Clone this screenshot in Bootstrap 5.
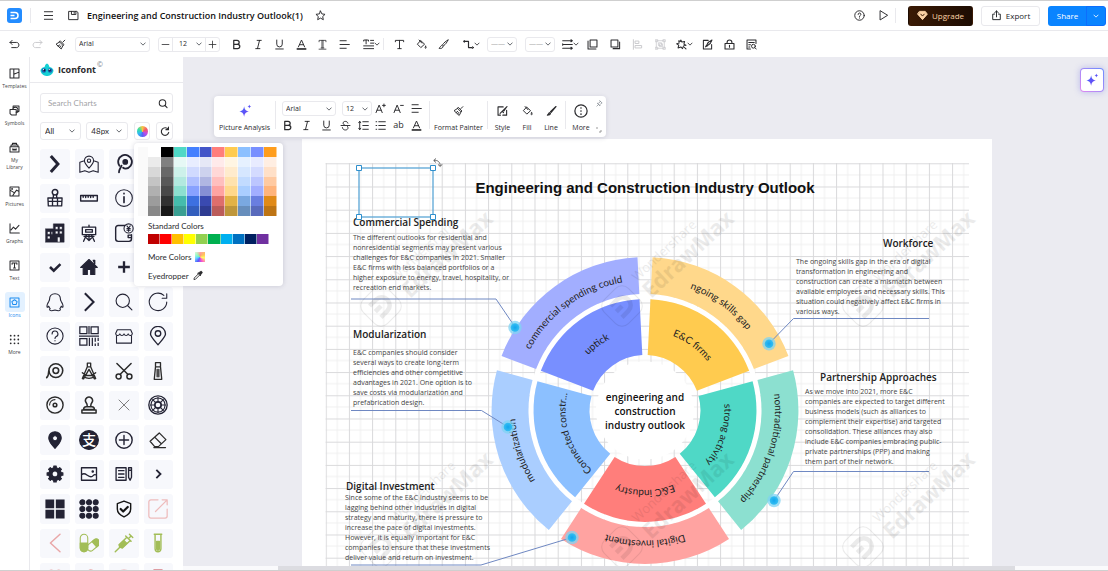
<!DOCTYPE html>
<html lang="en">
<head>
<meta charset="utf-8">
<meta name="viewport" content="width=device-width, initial-scale=1">
<title>Engineering and Construction Industry Outlook(1)</title>
<link href="https://cdn.jsdelivr.net/npm/bootstrap@5.3.0/dist/css/bootstrap.min.css" rel="stylesheet">
<style>
:root{--ink:#2b2b2e;--line:#e9e9ed;--canvas:#ebebf1}
body{font-family:"Open Sans","Noto Sans",sans-serif;font-size:7px;line-height:10px;color:var(--ink)}
.app{border-top:1px solid #cfcfcf;border-bottom:1px solid #cfcfcf;background:#fff}
button{font:inherit;color:inherit}
.ic{width:11px;height:11px;fill:none;stroke:currentColor;stroke-width:1.4;stroke-linejoin:round;stroke-linecap:round;flex:none;display:block}
.ic-sm{width:6px;height:6px}
.ic-lg{width:14px;height:14px}
.tool{border:0;background:none;padding:0;display:flex;align-items:center;justify-content:center}
.tool:disabled{color:#c9c9cc}
.w24{width:24px}
.w22{width:22px}
.topbar{height:30px;border-bottom:1px solid var(--line);padding:0 2px 0 7px}
.rule{width:1px;background:var(--line);flex:none}
.doc-title{font-size:9px;font-weight:600;line-height:14px;margin:0;color:#111}
.lead-tools{gap:14px}
.pill{height:20px;font-size:8px;line-height:10px;border-radius:3px;padding:0}
.pill-up{width:65px;background:linear-gradient(90deg,#3a1a04,#1d0c02);color:#fcd3a5}
.pill-ex{width:59px;border:1px solid var(--line);background:#fff}
.pill-sh{background:#0a84ff;color:#fff}
.toolbar{height:26px;padding-left:3px}
.form-select.mini{font:inherit;min-height:0;height:15px;padding:0 10px 0 3px;border:1px solid var(--line);border-radius:3px;background-color:#fff;background-size:6px 6px;background-position:right 3px center;color:var(--ink)}
.form-select.bare{border:0;border-left:1px solid var(--line);border-right:1px solid var(--line);border-radius:0;height:13px;padding-left:6px}
.form-select.pale{color:#aaa;width:30px;padding-right:8px}
.sizer{width:62px;height:15px;border:1px solid var(--line);border-radius:3px}
.set6{width:129px;margin-left:6px}.set3{width:67px}.set4{width:91px}
.rail{width:30px;border-right:1px solid var(--line);padding-top:6px;gap:10px}
.rail a{font-size:5px;line-height:7px;color:#444;text-decoration:none;text-align:center;display:block}
.rail .pad{width:20px;height:20px;border-radius:3px;margin:0 auto;display:flex;align-items:center;justify-content:center;color:var(--ink)}
.rail a.active,.rail a.active .pad{color:#1a8bf0}
.rail a.active .pad{background:#e3f1ff}
.panel{width:153px;background:#fff}
.panel-head{height:26px;padding-left:10px;border-bottom:1px solid var(--line)}
.brand{font-size:9px;font-weight:700;line-height:12px;margin:0}
.panel-body{padding:10px 10px 0}
.searchbox{height:20px;border:1px solid var(--line);border-radius:3px}
.searchbox input{font:8px/12px Lato,sans-serif;padding:1px 0 1px 7px;border:0;min-height:0;height:auto;background:none}
.searchbox input::placeholder{color:#a2a2a6}
.filters{gap:5px;margin:9px 0 9px;font:8px/10px Lato,sans-serif}
.filters .mini{height:18px;padding-left:4px;width:42px;background-position:right 5px center}
.sq{width:17px;height:18px;border:1px solid var(--line);border-radius:3px;margin-left:1px}
.tiles{display:grid;grid-template-columns:repeat(4,1fr);gap:5px}
.tile{border:0;padding:0;aspect-ratio:1;background:#f7f8fc;border-radius:3px;display:flex;align-items:center;justify-content:center;color:#232334}
.tile svg{width:20px;height:20px;fill:none;stroke:currentColor;stroke-width:1.3;stroke-linecap:round;stroke-linejoin:round}
.tile .f{fill:currentColor}
.wheel-dot{width:11px;height:11px;border-radius:50%;background:conic-gradient(#f6c544,#f4566a,#c04be8,#5a62f5,#2fb8f2,#37e0a0,#f6c544)}
.popover-colors{left:134px;top:86px;width:149px;height:143px;background:#fff;border-radius:4px;box-shadow:0 0 5px rgba(40,40,80,.18);padding:4px 6px 0 14px;z-index:5;font:8px/10px Lato,sans-serif}
.swatches{display:grid;grid-template-columns:repeat(10,1fr);grid-template-rows:repeat(7,1fr);width:129px;height:69px;box-shadow:-10px 0 #fafafa;margin-bottom:5px}
.swatches button,.std button{border:0;padding:0;border-right:1px solid rgba(255,255,255,.5)}
.std{width:121px;height:10px;margin:3px 0 8px}
.std button{flex:1}
.spectrum{width:10px;height:10px;background:linear-gradient(135deg,#fffb,#fff0 60%),conic-gradient(#f66,#fb5,#ff6,#f5c,#55f,#3cf,#5f8,#f66)}
.canvas{background:var(--canvas);padding-left:3px}
.floatbar{left:31px;top:39px;width:392px;height:41px;background:#fff;border-radius:4px;box-shadow:0 1px 5px rgba(40,40,80,.14);z-index:3;font-size:7px}
.floatbar .stack{height:41px;display:flex;flex-direction:column;align-items:center;border:0;background:none;padding:7px 0 0;gap:4px;white-space:nowrap;line-height:10px}
.floatbar .rule{height:28px;margin-top:5px}
.minigrid{display:grid;grid-template-columns:repeat(8,1fr);width:147px;margin:5px 4px 0 2px;grid-template-rows:15px 18px;align-items:center}
.ai{right:4px;top:11px;width:24px;height:24px;border-radius:4px;border:1px solid transparent;background:linear-gradient(#fff,#fff) padding-box,linear-gradient(45deg,#e08af0,#6a8cff) border-box;box-shadow:0 0 6px rgba(90,90,220,.35)}
.sheet{width:690px;margin-top:82px;height:520px;background:#fff;flex:none}
.sheet>svg{display:block}
.note{white-space:nowrap;margin:0;font-size:7px;line-height:10px;color:#444}
.note-h{white-space:nowrap;margin:0;font-size:10px;font-weight:600;line-height:14px;color:#222}
.sheet-title{font:bold 15px/20px "Liberation Sans",Arial,sans-serif;color:#111;margin:0;top:39px;padding-right:4px}
.hub{font:600 10px/14px "Open Sans",sans-serif;color:#111;left:293px;top:251px;width:100px}
.arc text{font:10px Lato,"Open Sans",sans-serif;fill:#222;text-anchor:middle}
.wm{opacity:.075}
.hscroll{height:4px;left:0;right:0;bottom:0;background:#fafafc;z-index:2}
.hscroll div{margin-left:95px;margin-right:93px;height:4px;background:#dcdce1}
</style>
</head>
<body>
<svg class="position-absolute" width="0" height="0" aria-hidden="true">
<symbol id="menu" viewBox="0 0 16 16"><path d="M2 2.500h12M2 8h12M2 13.500h12"/></symbol>
<symbol id="save" viewBox="0 0 16 16"><path d="M1.500 2h11l2 1.500V14h-13zM5 2v4.500h6.500V2M9 3.500v1.500"/></symbol>
<symbol id="star" viewBox="0 0 16 16"><path d="M8 1.500l2 4.200 4.600.6-3.400 3.200.9 4.600L8 11.800l-4.100 2.300.9-4.600L1.400 6.300l4.600-.6z"/></symbol>
<symbol id="help" viewBox="0 0 16 16"><circle cx="8" cy="8" r="6.900"/><path d="M6 6.500a2 2 0 1 1 3 1.600c-.7.4-1 .7-1 1.400M8 11.500v.3"/></symbol>
<symbol id="play" viewBox="0 0 16 16"><path d="M3 1.500v13L13.500 8z"/></symbol>
<symbol id="gem" viewBox="0 0 16 16"><path fill="currentColor" d="M4 2h8l3 4-7 8-7-8z"/><path stroke="#3a1a04" d="M5.500 6L8 8.800 10.500 6"/></symbol>
<symbol id="export" viewBox="0 0 16 16"><path d="M5 6H2.500v8h11V6H11M8 10V1.500M5.200 4L8 1.500 10.800 4"/></symbol>
<symbol id="chev" viewBox="0 0 16 16"><path stroke-width="2.200" d="M2.500 5.500L8 11l5.500-5.500"/></symbol>
<symbol id="undo" viewBox="0 0 16 16"><path d="M4.500 2L1.500 5l3 3M1.500 5H11c4.500 0 4.500 7.500 0 7.500H4"/></symbol>
<symbol id="redo" viewBox="0 0 16 16"><path d="M11.500 2l3 3-3 3M14.500 5H5C.500 5 .500 12.500 5 12.500h7"/></symbol>
<symbol id="painter" viewBox="0 0 16 16"><path d="M14.300 1.700L11.500 4.500M8 3l5 5-1.300 1.300-5-5zM6.700 4.300L1.500 7.500l7.500 7 2.700-5.200M4.500 10.300l2.500-1.800M6.800 12.300L8.500 10"/></symbol>
<symbol id="minus" viewBox="0 0 16 16"><path d="M2 8h12"/></symbol>
<symbol id="plus" viewBox="0 0 16 16"><path d="M2 8h12M8 2v12"/></symbol>
<symbol id="bold" viewBox="0 0 16 16"><path stroke-width="1.800" d="M4 2h5a2.900 2.900 0 0 1 0 5.800H4zM4 7.800h5.700a3.100 3.100 0 0 1 0 6.200H4z"/></symbol>
<symbol id="ital" viewBox="0 0 16 16"><path d="M6 2h6M4 14h6M9.500 2l-3 12"/></symbol>
<symbol id="under" viewBox="0 0 16 16"><path d="M4 1.500v6a4 4 0 0 0 8 0v-6M2.500 14.500h11"/></symbol>
<symbol id="color" viewBox="0 0 16 16"><path d="M3.500 11.500L8 1.500l4.500 10M5 8.300h6"/><path stroke-width="2.400" stroke-linecap="butt" d="M1 14.500h14"/></symbol>
<symbol id="tdown" viewBox="0 0 16 16"><path d="M3 4V2h10v2M7.200 2v11M8.800 2v11M6 13h4M3 14.800h10" stroke-width="1.100"/></symbol>
<symbol id="align" viewBox="0 0 16 16"><path d="M1.500 2.500h9M1.500 8h13.500M1.500 13.500h9"/></symbol>
<symbol id="talign" viewBox="0 0 16 16"><path d="M1 3V1.500h7V3M4.500 1.500V7M11 2h4.500M11 6h4.500M1 10h14.500M1 14h14.500"/></symbol>
<symbol id="tee" viewBox="0 0 16 16"><path d="M2 4V2h12v2M8 2v12M5.500 14h5"/></symbol>
<symbol id="bucket" viewBox="0 0 16 16"><path d="M6.500 2.500L2 7.500l5 5 5.500-5-5.500-5M4.500 1.500l4 4.500M14 10.500c1 1.500 1 3 0 3s-1-1.500 0-3z"/></symbol>
<symbol id="brush" viewBox="0 0 16 16"><path d="M14.500 1.500c-3 1.500-6 4-8 7l1.500 1.500c3-2.300 5.500-5.500 6.500-8.500zM6 9c-2 0-2 2.500-4.500 4.500C4 14.500 7.500 13.500 7.500 10.500"/></symbol>
<symbol id="conn" viewBox="0 0 16 16"><path stroke-width="1.700" d="M2 3.500h6v9h5"/><circle cx="2" cy="3.500" r="1.200"/><circle cx="14" cy="12.500" r="1.200"/></symbol>
<symbol id="weights" viewBox="0 0 16 16"><path d="M1 2.500h12M1 8h14M1 13.500h12M13 1l2 1.500L13 4M1 7v2M13 12l2 1.500-2 1.500" stroke-width="1.500"/></symbol>
<symbol id="front" viewBox="0 0 16 16"><path d="M4.500 1.500h10v10h-10zM1.500 3v11.500H13" stroke-width="1.500"/></symbol>
<symbol id="back" viewBox="0 0 16 16"><path d="M1.500 1.500h10v10h-10zM14 4.500V14H4.500" stroke-width="1.500"/></symbol>
<symbol id="lalign" viewBox="0 0 16 16"><path d="M2 1v14M5 3h5v3.500H5zM5 9.500h9V13H5z"/></symbol>
<symbol id="group" viewBox="0 0 16 16"><path d="M2.500 2.500h11v11h-11zM1 1h3v3H1zM12 1h3v3h-3zM1 12h3v3H1zM12 12h3v3h-3zM5.500 5.500h4v4h-4zM7 7h4v4H7z" stroke-width="1.100"/></symbol>
<symbol id="magic" viewBox="0 0 16 16"><path stroke-width="1.500" d="M7 1.500l1.500 3 4-1-1 4 3 1.500-3.500 1L9.500 14 7 11.500 3 13l1-4L1 7l3.500-1L4 2.500l2.500 1zM12 12l2.500 2.500"/></symbol>
<symbol id="edit" viewBox="0 0 16 16"><path stroke-width="1.500" d="M9 2H2v12.500h12V8M14.500 1.500C11 3 8 6 7 8.500L8 9.500C11 8 13.500 5 14.500 1.500zM6.500 9L5 11.500 8 10"/></symbol>
<symbol id="lock" viewBox="0 0 16 16"><path stroke-width="1.600" d="M1.500 6.500h13v8h-13zM4.500 6.500V5a3.500 3.500 0 0 1 7 0v1.500M8 9v3"/></symbol>
<symbol id="find" viewBox="0 0 16 16"><path stroke-width="1.500" d="M14.500 6.500v-5h-13v13h5M4 5h8M4 8.500h2.500M4 11.500h1.500"/><circle cx="10.800" cy="10.500" r="2.800"/><path d="M13 12.700l2 2"/></symbol>
<symbol id="templates" viewBox="0 0 16 16"><path stroke-width="1.500" d="M1.500 1.500h13v13h-13zM7 1.500v13M7 9l7.500-3"/></symbol>
<symbol id="symbols" viewBox="0 0 16 16"><path stroke-width="1.500" d="M6 4V1.500h8.500V9L12 10.500M1.500 6.500h9v8h-7l-2-2z"/><path stroke-width="1.500" d="M5.500 6.500a3.800 3.800 0 1 1 5 4"/></symbol>
<symbol id="library" viewBox="0 0 16 16"><path stroke-width="1.500" d="M1.500 7h13v7.500h-13zM3 7V4.500h10V7M5 4.500V2h6v2.500M5.500 10.500h5M5.500 10v1.500h5V10"/></symbol>
<symbol id="pictures" viewBox="0 0 16 16"><path stroke-width="1.500" d="M1.500 1.500h13v13h-13zM1.500 6l6.500 4 3-4 3.500 2M5 14.500l3-4.500"/><path d="M4.500 3.500v1.500M3.800 4.300h1.500"/></symbol>
<symbol id="graphs" viewBox="0 0 16 16"><path stroke-width="1.500" d="M1.500 1v13.500h13.500M3 10l3.500-4 3 3 5-5.500"/></symbol>
<symbol id="textbox" viewBox="0 0 16 16"><path stroke-width="1.500" d="M1.500 1.500h13v13h-13zM4.500 6V4.500h7V6M8 4.500v7M6.500 11.500h3"/></symbol>
<symbol id="icons" viewBox="0 0 16 16"><path stroke-width="1.500" d="M1.500 1.500h13v13h-13zM8 4l3.800 2.700-1.500 4.300H5.700L4.200 6.700z"/></symbol>
<symbol id="apps" viewBox="0 0 16 16"><g fill="currentColor" stroke="none"><circle cx="2.500" cy="2.500" r="1.300"/><circle cx="8" cy="2.500" r="1.300"/><circle cx="13.500" cy="2.500" r="1.300"/><circle cx="2.500" cy="8" r="1.300"/><circle cx="8" cy="8" r="1.300"/><circle cx="13.500" cy="8" r="1.300"/><circle cx="2.500" cy="13.500" r="1.300"/><circle cx="8" cy="13.500" r="1.300"/><circle cx="13.500" cy="13.500" r="1.300"/></g></symbol>
<symbol id="search" viewBox="0 0 16 16"><circle cx="7.200" cy="7.200" r="5.200" stroke-width="1.700"/><path stroke-width="1.700" d="M11.200 11.200l3.300 3.300"/></symbol>
<symbol id="reload" viewBox="0 0 16 16"><path stroke-width="1.800" d="M13 4.500A6 6 0 1 0 14 9.500M13.500 1v4H9.500"/></symbol>
<symbol id="strike" viewBox="0 0 16 16"><path d="M11.500 4.500C11 1 4.500 1.200 4.500 4.500c0 1.500 1 2.500 2.500 3M11 9.500c2 3-.500 5-3 5-2.500 0-4-1-4.500-3.500M1.500 8h13"/></symbol>
<symbol id="spacing" viewBox="0 0 16 16"><path d="M2.500 2v12M1 4l1.500-2L4 4M1 12l1.500 2L4 12M7 2.500h8M7 8h8M7 13.500h8"/></symbol>
<symbol id="bullets" viewBox="0 0 16 16"><path d="M1.500 2.500h1M5.500 2.500H15M1.500 8h1M5.500 8H15M1.500 13.500h1M5.500 13.500H15"/></symbol>
<symbol id="bigger" viewBox="0 0 16 16"><path d="M1.500 14L6 3l4.500 11M3 10.500h6M13 1.500v4M11 3.500h4"/></symbol>
<symbol id="smaller" viewBox="0 0 16 16"><path d="M1.500 14L6 3l4.500 11M3 10.500h6M11 3.500h4"/></symbol>
<symbol id="style" viewBox="0 0 16 16"><path stroke-width="1.600" d="M9 2H1.500v12M1.500 14H5M14 7v7H8.500M14.500 1.500L4.500 11.500M8 9l1.500 1.500M14.500 1.500L10 8"/></symbol>
<symbol id="pen" viewBox="0 0 16 16"><path stroke-width="1.700" d="M14.500 1.500L6.500 9l1 1zM5 10.500c-1 .5-1 2-3 3.500 2.500 0 4-.5 4.500-2z"/></symbol>
<symbol id="more" viewBox="0 0 16 16"><circle cx="8" cy="8" r="7"/><path stroke-width="1.800" d="M8 4.500v.1M8 8v.1M8 11.500v.1"/></symbol>
<symbol id="pin" viewBox="0 0 16 16"><path d="M9 2l5 5-2 .5-3 3v3L3 7.500h3l3-3zM5.500 10.500L2 14"/></symbol>
<linearGradient id="sg" x1="0" y1="0" x2="1" y2="1"><stop offset="0" stop-color="#3b6bff"/><stop offset="1" stop-color="#7a3cf0"/></linearGradient>
<symbol id="spark" viewBox="0 0 16 16"><path fill="url(#sg)" stroke="none" d="M7 2.500c.8 4 1.500 5 5.500 6-4 1-4.700 2-5.500 6-.8-4-1.500-5-5.500-6 4-1 4.700-2 5.500-6zM13 .500c.3 1.500.6 1.900 2.200 2.300-1.600.4-1.900.8-2.200 2.300-.3-1.500-.6-1.900-2.200-2.300 1.600-.4 1.900-.8 2.200-2.300z"/></symbol>
<symbol id="dropper" viewBox="0 0 16 16"><path d="M9 5l-7 7-.5 2.500L4 14l7-7"/><path fill="currentColor" d="M8 4l1.500-.5 2.500-2c1.500-1 3.500 1 2.500 2.500L12.500 6.500 12 8z"/></symbol>
</svg>

<div class="app d-flex flex-column vh-100 overflow-hidden">
<header class="topbar d-flex align-items-center flex-shrink-0">
  <svg width="15" height="15" viewBox="0 0 15 15" role="img" aria-label="EdrawMax"><rect width="15" height="15" rx="3" fill="#238cff"/><path d="M3.500 4.500H8a3 3 0 0 1 0 6H3.500M3.500 7.500h4" fill="none" stroke="#fff" stroke-width="1.500"/></svg>
  <span class="rule ms-2 me-2" style="height:15px"></span>
  <div class="lead-tools d-flex ms-1">
    <button class="tool" aria-label="Menu"><svg class="ic"><use href="#menu"/></svg></button>
    <button class="tool" aria-label="Save"><svg class="ic"><use href="#save"/></svg></button>
  </div>
  <h1 class="doc-title ms-2">Engineering and Construction Industry Outlook(1)</h1>
  <button class="tool ms-2 ps-1" aria-label="Favourite"><svg class="ic"><use href="#star"/></svg></button>
  <div class="ms-auto d-flex align-items-center">
    <button class="tool w24" aria-label="Help"><svg class="ic"><use href="#help"/></svg></button>
    <button class="tool w24" aria-label="Present"><svg class="ic"><use href="#play"/></svg></button>
    <span class="rule me-2" style="height:15px"></span>
    <button class="btn pill pill-up d-flex align-items-center justify-content-center gap-1 ms-1"><svg class="ic"><use href="#gem"/></svg>Upgrade</button>
    <button class="btn pill pill-ex d-flex align-items-center justify-content-center gap-1 ms-2"><svg class="ic"><use href="#export"/></svg>Export</button>
    <div class="btn-group ms-2">
      <button class="btn pill pill-sh" style="width:39px">Share</button>
      <button class="btn pill pill-sh border-start border-primary d-flex align-items-center justify-content-center" style="width:20px" aria-label="Share options"><svg class="ic ic-sm"><use href="#chev"/></svg></button>
    </div>
  </div>
</header>

<div class="toolbar d-flex align-items-center flex-shrink-0" role="toolbar" aria-label="Formatting">
  <button class="tool w22" aria-label="Undo"><svg class="ic"><use href="#undo"/></svg></button>
  <button class="tool w24" disabled aria-label="Redo"><svg class="ic"><use href="#redo"/></svg></button>
  <button class="tool w22" aria-label="Format painter"><svg class="ic"><use href="#painter"/></svg></button>
  <select class="form-select mini ms-1" style="width:75px" aria-label="Font"><option>Arial</option></select>
  <div class="sizer d-flex align-items-center ms-2">
    <button class="tool" style="width:13px" aria-label="Decrease"><svg class="ic" style="width:9px"><use href="#minus"/></svg></button>
    <select class="form-select mini bare flex-fill w-auto" aria-label="Font size"><option>12</option></select>
    <button class="tool" style="width:13px" aria-label="Increase"><svg class="ic" style="width:9px"><use href="#plus"/></svg></button>
  </div>
  <div class="set6 d-flex">
    <button class="tool flex-fill" aria-label="Bold"><svg class="ic"><use href="#bold"/></svg></button>
    <button class="tool flex-fill" aria-label="Italic"><svg class="ic"><use href="#ital"/></svg></button>
    <button class="tool flex-fill" aria-label="Underline"><svg class="ic"><use href="#under"/></svg></button>
    <button class="tool flex-fill" aria-label="Font colour"><svg class="ic"><use href="#color"/></svg></button>
    <button class="tool flex-fill" aria-label="Text direction"><svg class="ic"><use href="#tdown"/></svg></button>
    <button class="tool flex-fill" aria-label="Align"><svg class="ic"><use href="#align"/></svg></button>
  </div>
  <button class="tool w24 ms-1" aria-label="Line spacing"><svg class="ic"><use href="#talign"/></svg><svg class="ic ic-sm"><use href="#chev"/></svg></button>
  <span class="rule" style="height:12px"></span>
  <div class="set3 d-flex ms-1">
    <button class="tool flex-fill" aria-label="Text"><svg class="ic"><use href="#tee"/></svg></button>
    <button class="tool flex-fill" aria-label="Fill"><svg class="ic"><use href="#bucket"/></svg></button>
    <button class="tool flex-fill" aria-label="Line"><svg class="ic"><use href="#brush"/></svg></button>
  </div>
  <button class="tool w24 ms-1" aria-label="Connector"><svg class="ic"><use href="#conn"/></svg><svg class="ic ic-sm"><use href="#chev"/></svg></button>
  <select class="form-select mini pale ms-1" aria-label="Line weight"><option>——</option></select>
  <select class="form-select mini pale ms-2" aria-label="Line dash"><option>——</option></select>
  <button class="tool w22 ms-1" aria-label="Arrows"><svg class="ic"><use href="#weights"/></svg><svg class="ic ic-sm"><use href="#chev"/></svg></button>
  <div class="set4 d-flex">
    <button class="tool flex-fill" aria-label="Bring to front"><svg class="ic"><use href="#front"/></svg></button>
    <button class="tool flex-fill" aria-label="Send to back"><svg class="ic"><use href="#back"/></svg></button>
    <button class="tool flex-fill" disabled aria-label="Align shapes"><svg class="ic"><use href="#lalign"/></svg></button>
    <button class="tool flex-fill" disabled aria-label="Group"><svg class="ic"><use href="#group"/></svg></button>
  </div>
  <button class="tool w24" aria-label="Effects"><svg class="ic"><use href="#magic"/></svg><svg class="ic ic-sm"><use href="#chev"/></svg></button>
  <div class="set3 d-flex">
    <button class="tool flex-fill" aria-label="Edit"><svg class="ic"><use href="#edit"/></svg></button>
    <button class="tool flex-fill" aria-label="Lock"><svg class="ic"><use href="#lock"/></svg></button>
    <button class="tool flex-fill" aria-label="Find"><svg class="ic"><use href="#find"/></svg></button>
  </div>
</div>

<div class="d-flex flex-fill position-relative" style="min-height:0">
  <nav class="rail d-flex flex-column flex-shrink-0" aria-label="Libraries">
    <a href="#"><span class="pad"><svg class="ic"><use href="#templates"/></svg></span>Templates</a>
    <a href="#"><span class="pad"><svg class="ic"><use href="#symbols"/></svg></span>Symbols</a>
    <a href="#"><span class="pad"><svg class="ic"><use href="#library"/></svg></span>My<br>Library</a>
    <a href="#"><span class="pad"><svg class="ic"><use href="#pictures"/></svg></span>Pictures</a>
    <a href="#"><span class="pad"><svg class="ic"><use href="#graphs"/></svg></span>Graphs</a>
    <a href="#"><span class="pad"><svg class="ic"><use href="#textbox"/></svg></span>Text</a>
    <a href="#" class="active"><span class="pad"><svg class="ic"><use href="#icons"/></svg></span>Icons</a>
    <a href="#"><span class="pad"><svg class="ic"><use href="#apps"/></svg></span>More</a>
  </nav>

  <aside class="panel flex-shrink-0 overflow-hidden">
    <div class="panel-head d-flex align-items-center">
      <svg width="14" height="14" viewBox="0 0 14 14" class="me-1" aria-hidden="true"><path d="M7 .5C9 1.500 9 3 9.500 4 12 4.500 13.500 6 13.500 8 12.500 12 9 13 7 13S1.500 12 .500 8C.500 6 2 4.500 4.500 4 5 3 5 1.500 7 .500z" fill="#14cfd3"/><circle cx="3.900" cy="7.500" r="2.300" fill="#1b66b8"/><circle cx="10.100" cy="7.500" r="2.300" fill="#1b66b8"/><circle cx="4.300" cy="7.300" r="1.100" fill="#0b1a30"/><circle cx="9.700" cy="7.300" r="1.100" fill="#0b1a30"/><circle cx="3.500" cy="6.600" r=".6" fill="#fff"/><circle cx="9.300" cy="6.600" r=".6" fill="#fff"/></svg>
      <h2 class="brand">Iconfont</h2><span class="align-self-start text-secondary" style="padding:3px 1px">©</span>
    </div>
    <div class="panel-body">
      <div class="searchbox d-flex align-items-center">
        <label class="visually-hidden" for="q">Search Charts</label>
        <input id="q" class="form-control shadow-none" placeholder="Search Charts">
        <svg class="ic me-1" style="width:10px"><use href="#search"/></svg>
      </div>
      <div class="filters d-flex">
        <select class="form-select mini" aria-label="Category"><option>All</option></select>
        <select class="form-select mini" aria-label="Size"><option>48px</option></select>
        <button class="tool sq" aria-label="Colour"><span class="wheel-dot"></span></button>
        <button class="tool sq" aria-label="Refresh"><svg class="ic" style="width:10px"><use href="#reload"/></svg></button>
      </div>
      <div class="tiles" id="tiles"></div>
    </div>
  </aside>

  <div class="popover-colors position-absolute" role="dialog" aria-label="Colours">
    <div class="swatches" id="theme"></div>
    <div>Standard Colors</div>
    <div class="std d-flex" id="std"></div>
    <button class="tool gap-1 mb-2">More Colors <span class="spectrum"></span></button>
    <button class="tool gap-1">Eyedropper <svg class="ic" style="width:10px"><use href="#dropper"/></svg></button>
  </div>

  <main class="canvas flex-fill position-relative overflow-hidden d-flex justify-content-center align-items-start">
    <div class="floatbar position-absolute d-flex">
      <button class="stack" style="width:61px"><svg class="ic ic-lg" style="height:16px"><use href="#spark"/></svg>Picture Analysis</button>
      <span class="rule"></span>
      <div class="minigrid">
        <select class="form-select mini" style="grid-column:span 3;width:54px;margin-left:4px" aria-label="Font"><option>Arial</option></select>
        <select class="form-select mini" style="grid-column:span 2;width:30px;margin-left:6px" aria-label="Font size"><option>12</option></select>
        <button class="tool" aria-label="Bigger"><svg class="ic"><use href="#bigger"/></svg></button>
        <button class="tool" aria-label="Smaller"><svg class="ic"><use href="#smaller"/></svg></button>
        <button class="tool" aria-label="Align"><svg class="ic"><use href="#align"/></svg></button>
        <button class="tool" aria-label="Bold"><svg class="ic"><use href="#bold"/></svg></button>
        <button class="tool" aria-label="Italic"><svg class="ic"><use href="#ital"/></svg></button>
        <button class="tool" aria-label="Underline"><svg class="ic"><use href="#under"/></svg></button>
        <button class="tool" aria-label="Strike"><svg class="ic"><use href="#strike"/></svg></button>
        <button class="tool" aria-label="Line spacing"><svg class="ic"><use href="#spacing"/></svg></button>
        <button class="tool" aria-label="Bullets"><svg class="ic"><use href="#bullets"/></svg></button>
        <button class="tool" style="font-size:9px">ab</button>
        <button class="tool" aria-label="Font colour"><svg class="ic"><use href="#color"/></svg></button>
      </div>
      <span class="rule"></span>
      <button class="stack" style="width:57px"><svg class="ic" style="height:16px"><use href="#painter"/></svg>Format Painter</button>
      <span class="rule"></span>
      <button class="stack" style="width:29px"><svg class="ic" style="height:16px"><use href="#style"/></svg>Style</button>
      <button class="stack" style="width:20px"><svg class="ic" style="height:16px"><use href="#bucket"/></svg>Fill</button>
      <button class="stack" style="width:28px"><svg class="ic" style="height:16px"><use href="#pen"/></svg>Line</button>
      <span class="rule"></span>
      <button class="stack" style="width:30px"><svg class="ic ic-lg" style="height:16px"><use href="#more"/></svg>More</button>
      <div class="d-flex flex-column justify-content-between py-1 text-secondary"><svg class="ic" style="width:7px;height:7px"><use href="#pin"/></svg><svg width="6" height="6" viewBox="0 0 6 6" fill="none" stroke="#999"><path d="M0 1h2M5 3v2H3"/></svg></div>
    </div>
    <button class="ai tool position-absolute" aria-label="AI assistant"><svg class="ic ic-lg"><use href="#spark"/></svg></button>

    <article class="sheet position-relative">
      <svg width="690" height="520" viewBox="302 139 690 520" aria-hidden="true">
        <defs>
          <pattern id="grid" x="325.700" y="163.300" width="23.200" height="23.200" patternUnits="userSpaceOnUse"><path d="M11.600 0v23.200M0 11.600h23.200" stroke="#f0f0f0" fill="none"/><path d="M0 0v23.200M0 0h23.200" stroke="#d9d9db" stroke-width="2" fill="none"/></pattern>
          <path id="outer" d="M-84-128.400A153.500 153.500 0 0 1 84-128.400L63.800-97.500A116.500 116.500 0 0 0-63.800-97.500z"/>
          <path id="inner" d="M-61-93.300A111.500 111.500 0 0 1 61-93.300L30.400-46.400A55.500 55.500 0 0 0-30.400-46.400z"/>
          <path id="arcO" d="M-130 0A130 130 0 0 1 130 0"/>
          <path id="arcI" d="M-79.500 0A79.500 79.500 0 0 1 79.500 0"/>
          <radialGradient id="dotg"><stop offset="0" stop-color="#12a5ee"/><stop offset="1" stop-color="#35bff2"/></radialGradient>
          <g id="dot"><circle r="6.700" fill="#7fd3f3" opacity=".75"/><circle r="4.300" fill="url(#dotg)"/></g>
          <g id="mark" class="wm"><g transform="rotate(-45)"><rect x="-17" y="-17" width="34" height="34" rx="9" fill="none" stroke="#000"/></g><path transform="rotate(-45)" d="M-8-8H1A8 8 0 0 1 1 8H-8M-8 0H0" fill="none" stroke="#000" stroke-width="4.500"/><text transform="translate(15 -24) rotate(-43)" font-family="Open Sans" font-size="13">Wondershare</text><text transform="translate(29 -7) rotate(-43)" font-family="Open Sans" font-weight="700" font-size="22">EdrawMax</text></g>
        </defs>
        <rect x="325.500" y="163" width="643.500" height="480" fill="url(#grid)"/>
        <g class="arc" transform="translate(645 410.500)">
          <circle r="49" fill="#fff"/><circle r="114" fill="none" stroke="#fff" stroke-width="5"/>
          <g transform="rotate(36)"><use href="#outer" fill="#ffd88b"/><use href="#inner" fill="#ffcb4f"/><text><textPath href="#arcO" startOffset="50%">ngoing skills gap</textPath></text><text><textPath href="#arcI" startOffset="50%">E&amp;C firms</textPath></text></g>
          <g transform="rotate(108)"><use href="#outer" fill="#8ce0d0"/><use href="#inner" fill="#4fd8c6"/><text><textPath href="#arcO" startOffset="50%">nontraditional partnership</textPath></text><text><textPath href="#arcI" startOffset="50%">strong activity</textPath></text></g>
          <g transform="rotate(180)"><use href="#outer" fill="#ffa3a1"/><use href="#inner" fill="#ff7e7b"/><text><textPath href="#arcO" startOffset="50%">Digital investment</textPath></text><text><textPath href="#arcI" startOffset="50%">E&amp;C industry</textPath></text></g>
          <g transform="rotate(252)"><use href="#outer" fill="#aaceff"/><use href="#inner" fill="#8cc0ff"/><text><textPath href="#arcO" startOffset="50%">modularization</textPath></text><text><textPath href="#arcI" startOffset="50%">Connected constr...</textPath></text></g>
          <g transform="rotate(324)"><use href="#outer" fill="#a2aeff"/><use href="#inner" fill="#788fff"/><text><textPath href="#arcO" startOffset="50%">commercial spending could</textPath></text><text><textPath href="#arcI" startOffset="50%">uptick</textPath></text></g>
        </g>
        <g fill="none" stroke="#6f88c2"><path d="M351 299h145l19 28M351 410.500h130.500L508 427M351 565h130l91-27.500M929 318.500H793.500L769 343.700M929 471.500H793.500L774 500.500"/></g>
        <use href="#dot" x="515" y="327.500"/><use href="#dot" x="508" y="427"/><use href="#dot" x="572" y="537.500"/><use href="#dot" x="769" y="343.700"/><use href="#dot" x="774" y="500.500"/>
        <use href="#mark" x="381" y="306"/><use href="#mark" x="622" y="306"/><use href="#mark" x="863" y="306"/><use href="#mark" x="381" y="547"/><use href="#mark" x="622" y="547"/><use href="#mark" x="863" y="547"/>
      </svg>
      <h2 class="sheet-title position-absolute start-0 end-0 text-center">Engineering and Construction Industry Outlook</h2>
      <p class="hub position-absolute text-center m-0">engineering and<br>construction<br>industry outlook</p>
      <h3 class="note-h position-absolute" style="left:51px;top:76px">Commercial Spending</h3>
      <p class="note position-absolute" style="left:51px;top:94px">The different outlooks for residential and<br>nonresidential segments may present various<br>challenges for E&amp;C companies in 2021. Smaller<br>E&amp;C firms with less balanced portfolios or a<br>higher exposure to energy, travel, hospitality, or<br>recreation end markets.</p>
      <h3 class="note-h position-absolute" style="left:51px;top:188px">Modularization</h3>
      <p class="note position-absolute" style="left:51px;top:209px">E&amp;C companies should consider<br>several ways to create long-term<br>efficiencies and other competitive<br>advantages in 2021. One option is to<br>save costs via modularization and<br>prefabrication design.</p>
      <h3 class="note-h position-absolute" style="left:44px;top:340px">Digital Investment</h3>
      <p class="note position-absolute" style="left:43px;top:354px">Since some of the E&amp;C industry seems to be<br>lagging behind other industries in digital<br>strategy and maturity, there is pressure to<br>increase the pace of digital investments.<br>However, it is equally important for E&amp;C<br>companies to ensure that these investments<br>deliver value and return on investment.</p>
      <h3 class="note-h position-absolute" style="left:581px;top:97px">Workforce</h3>
      <p class="note position-absolute" style="left:494px;top:118px">The ongoing skills gap in the era of digital<br>transformation in engineering and<br>construction can create a mismatch between<br>available employees and necessary skills. This<br>situation could negatively affect E&amp;C firms in<br>various ways.</p>
      <h3 class="note-h position-absolute" style="left:518px;top:231px">Partnership Approaches</h3>
      <p class="note position-absolute" style="left:503px;top:248px">As we move into 2021, more E&amp;C<br>companies are expected to target different<br>business models (such as alliances to<br>complement their expertise) and targeted<br>consolidation. These alliances may also<br>include E&amp;C companies embracing public-<br>private partnerships (PPP) and making<br>them part of their network.</p>
      <svg class="position-absolute start-0 top-0" width="150" height="90" viewBox="302 139 150 90" fill="none" aria-hidden="true"><rect x="359" y="168" width="74" height="49" stroke="#5ba6d6" stroke-width="1.300"/><g fill="#fff" stroke="#2f8fcc"><path d="M356.500 165.500h5v5h-5zM430.500 165.500h5v5h-5zM356.500 214.500h5v5h-5zM430.500 214.500h5v5h-5z"/></g><path d="M434 160.500c4-.5 6 1.500 6.300 5.500M436 158.500l-2.300 2 2.300 2M438 164.500l2.300 2 1.700-2.200" stroke="#666"/></svg>
    </article>
    <div class="hscroll position-absolute"><div></div></div>
  </main>
</div>
</div>

<script src="https://cdn.jsdelivr.net/npm/bootstrap@5.3.0/dist/js/bootstrap.bundle.min.js"></script>
<script>
const theme = [
 ['#ffffff','#000000','#4fd8c6','#4480ff','#4355c8','#ff7e7b','#ffcb4f','#8cc0ff','#788fff','#ff9d1c'],
 ['#ebebeb','#808080','#e6f8f5','#e8edff','#e6e8f6','#ffeaea','#fff5e3','#e6f1ff','#e8ebff','#ffeee2'],
 ['#d8d8d8','#686868','#cdf1ea','#d0daff','#cdd2ee','#ffd8d7','#ffebcd','#d6e7ff','#d4dbff','#ffe0c8'],
 ['#c4c4c4','#585858','#b2e9df','#b0c0ff','#b0b6e2','#ffbfbe','#ffe2ae','#c2dbff','#bcc6ff','#ffcaa2'],
 ['#b0b0b0','#484848','#8ce0d0','#88a2ff','#868fd4','#ffa3a1','#ffd88b','#aaceff','#a2aeff','#ffb47c'],
 ['#9c9c9c','#303030','#45bcac','#3d70e0','#3a4ab0','#de6e6c','#e2b246','#7aa8e0','#697ee0','#e08a18'],
 ['#888888','#181818','#3a9f92','#335ebd','#2f3c92','#bb5c5a','#be963b','#678ebc','#586abc','#bd7414']];
const standard = ['#c00000','#ff0000','#ffc000','#ffff00','#92d050','#00b050','#00b0f0','#0070c0','#002060','#7030a0'];
const swatch = c => `<button aria-label="${c}" style="background:${c}"></button>`;
document.getElementById('theme').innerHTML = theme.flat().map(swatch).join('');
document.getElementById('std').innerHTML = standard.map(swatch).join('');

const PINK = '#e9a7a8', GREEN = '#a2bd57';
const dots = [4,12,20].flatMap(y => [4,12,20].map(x => `<circle class="f" cx="${x}" cy="${y}" r="3"/>`)).join('');
const spokes = n => Array.from({length:n}, (_, i) => `<path d="M12 8V3" transform="rotate(${i*360/n} 12 12)"/>`).join('');
const teeth = Array.from({length:8}, (_, i) => `<rect class="f" x="10.500" y="2.500" width="3" height="3" transform="rotate(${i*45} 12 12)"/>`).join('');
const icons = [
 ['<path stroke-width="3.600" stroke-linejoin="miter" stroke-linecap="butt" d="M7 2.500l8.500 9.500L7 21.500"/>'],
 ['<path d="M12 17c-4-4.500-5.500-6.500-5.500-9a5.500 5.500 0 0 1 11 0c0 2.500-1.500 4.500-5.500 9zM5.500 8.500L1 10v12l6-2 5 2 5-2 6 2V10l-4.500-1.500"/><circle cx="12" cy="8" r="2"/>'],
 ['<path stroke-width="2.200" d="M6 22c0-4 2-5 3-8M6.500 14A8.200 8.200 0 1 1 14 17.500c-2 0-3-1-3-1"/><circle class="f" cx="13.500" cy="9.500" r="2.800"/>'],
 [''],
 ['<path stroke-width="1.600" d="M3.500 12h17l-.500 9.500H4zM3.500 16h17M9 12v9.500M15 12v9.500M10 12V8M14 12V8"/><circle cx="12" cy="5" r="3.300" stroke-width="1.800"/>'],
 ['<path stroke-width="1.700" d="M2 9h20v6.500H2zM5 9v2M8 9v2.500M11 9v2M14 9v2.500M17 9v2"/>'],
 ['<circle cx="12" cy="12" r="10"/><path stroke-width="2" d="M12 10.500v7M12 6.500v.3"/>'],
 [''],
 ['<path class="f" stroke-width=".5" fill-rule="evenodd" d="M.500 7H10V1h13v22H.500zM3 10.500v3h3v-3zM7.500 10.500v3H9v-3zM3 16v3h3v-3zM12.500 4.500v3h3v-3zM17.500 4.500v3h3v-3zM12.500 10v3h3v-3zM17.500 10v3h3v-3zM15 17v6h3v-6z"/>'],
 ['<path stroke-width="1.600" d="M4 5h16v9H4zM12 5V2.500M8 8h8v3H8zM6 16h12M9 14l-3.500 8M15 14l3.500 8M12 14v6M9 18l3 3 3-3"/>'],
 ['<path stroke-width="1.700" d="M13 3H5a3 3 0 0 0-3 3v13a3 3 0 0 0 3 3h13a3 3 0 0 0 3-3v-5M21 14.500h-4v3h4"/><circle cx="17.500" cy="6.500" r="5.500"/><path d="M15.500 3.500l2 2.500 2-2.500M17.500 6v4M15.500 6.500h4M15.500 8.500h4"/>'],
 [''],
 ['<path stroke-width="3" stroke-linecap="butt" stroke-linejoin="miter" d="M6 12l4.500 4.500L18.500 8.500"/>'],
 ['<path class="f" d="M12 3l10 9.500h-3V21h-5v-6h-4v6H5v-8.500H2zM17 4h2v4z"/>'],
 ['<path stroke-width="2.800" stroke-linecap="butt" d="M12 5v14M5 12h14"/>'],
 [''],
 ['<path d="M12 2c-4.500 0-6.500 3-6.500 6.500 0 1.500-.5 2-1 3-1.500 2.500-2.500 5-2 6.500.8.500 1.700-.3 2-1 .4 1.500 1 2.300 1.700 3-1.200.8-.8 2.500 2 2.500 2 0 3-.8 3.800-.8s1.800.8 3.800.8c2.800 0 3.200-1.700 2-2.500.7-.7 1.300-1.500 1.700-3 .3.700 1.200 1.500 2 1 .5-1.500-.5-4-2-6.500-.5-1-1-1.500-1-3C18.500 5 16.500 2 12 2z"/>'],
 ['<path stroke-width="2.400" stroke-linejoin="miter" stroke-linecap="butt" d="M7 1.500l10.500 10.500L7 22.500"/>'],
 ['<circle cx="10.500" cy="10.500" r="8"/><path d="M16.500 16.500l5 5"/>'],
 ['<path d="M22.500 12a10.500 10.500 0 1 1-3.500-8M22.500 2v5.500H17"/>'],
 ['<circle cx="12" cy="12" r="9.700"/><path d="M8.500 9.500a3.500 3.500 0 1 1 5 3.200c-1 .6-1.500 1.200-1.500 2.300M12 17.500v.3"/>'],
 ['<path stroke-width="1.500" stroke-linejoin="miter" stroke-linecap="butt" d="M1 1h8.500v8H1zM14.500 1H23v8h-8.500zM1 15h8.500v8H1zM12 0v10M0 12h24M12.500 14v10M16 14v10M19.500 14v5M23 14v4M23 20v4M19.500 21v3"/>'],
 ['<path d="M4 4.500h16l2 4.500c0 3-4 3-5 .5-1 2.500-4 2.500-5 0-1 2.500-4 2.500-5 0C6 12 2 12 2 9zM3 12v8.500h18V12"/>'],
 ['<path d="M12 22.500C6 15.500 3 12.500 3 9.500a9 9 0 0 1 18 0c0 3-3 6-9 13z" stroke-width="1.600"/><circle cx="12" cy="9" r="3.300" stroke-width="1.600"/>'],
 ['<circle cx="13" cy="11.500" r="8.300" stroke-width="1.900"/><circle cx="13" cy="11.500" r="3.400" stroke-width="1.900"/><path stroke-width="1.900" d="M4.500 12c0 4-.5 6-2.500 8"/>','#2b2b2b'],
 ['<path stroke-width="1.600" d="M10 2.500h4V7h-4zM10 7L4 21l1.500.5L12 10l6.500 11.500L20 21 14 7M4 14c4.500 4.500 11.500 4.500 16 0M6 19c3 2.500 9 2.500 12 0"/>','#2b2b2b'],
 ['<circle cx="5.500" cy="18.500" r="3" stroke-width="1.800"/><circle cx="18.500" cy="18.500" r="3" stroke-width="1.800"/><path stroke-width="1.800" d="M7.500 16L20.500 3M16.500 16L3.500 3"/>','#2b2b2b'],
 ['<path stroke-width="1.600" d="M9 2h6v5H9zM9 7L7.500 22h9L15 7M11 10v9M13 10v9"/>','#2b2b2b'],
 ['<circle cx="12" cy="12" r="9.700" stroke-width="1.700"/><circle cx="12" cy="12" r="2.200" stroke-width="1.800"/><path d="M5.500 12A6.500 6.500 0 0 1 12 5.500"/>','#2b2b2b'],
 ['<path stroke-width="1.800" d="M9.500 14c1-2 0-3.500-1-5a4.200 4.200 0 1 1 7 0c-1 1.500-2 3-1 5M5.500 17.500c0-3 1-3.500 3-3.500h7c2 0 3 .5 3 3.500zM3.500 18h17v3.500h-17z"/>','#2b2b2b'],
 ['<path stroke-width="1" d="M6 6l12 12M18 6L6 18"/>','#666'],
 ['<circle cx="12" cy="12" r="11" stroke-width="1.600"/><circle cx="12" cy="12" r="8.500"/><circle cx="12" cy="12" r="3.800" stroke-width="2"/>'+spokes(8)],
 ['<path class="f" fill-rule="evenodd" d="M12 22C6.500 16 4.500 13 4.500 9.500a7.500 7.500 0 0 1 15 0c0 3.500-2 6.500-7.500 12.500zM12 7a3 3 0 1 0 .1 0z"/>'],
 ['<circle class="f" cx="12" cy="12" r="11.300"/><text x="12" y="18" text-anchor="middle" font-size="17" font-weight="500" fill="#fff" stroke="none" font-family="Noto Sans CJK SC, sans-serif">支</text>'],
 ['<circle cx="12" cy="12" r="9.800" stroke-width="1.700"/><path stroke-width="1.700" d="M12 6.500v11M6.500 12h11"/>'],
 ['<path stroke-width="1.500" d="M2.500 13.500L13.500 3.500l8 8-9 8.500H8zM8 8.500l8 8M7 21h14"/>','#2b2b2b'],
 ['<path class="f" fill-rule="evenodd" d="M12 4.500a7.500 7.500 0 1 0 .1 0zM12 8.500a3.500 3.500 0 1 1-.1 0z"/>'+teeth],
 ['<path d="M3 4.500h18v15H3zM3 13c3-3 5-1 7 .500s5 3 7 .500 3-1 4-.500" stroke-width="1.600"/><circle class="f" cx="16.500" cy="9" r=".9"/>'],
 ['<path stroke-width="1.600" d="M2.500 4.500h12v15h-12zM5.500 8h6.500M5.500 12h6.500M5.500 16h6.500M17.500 4.500H21V16l-1.700 3.500L17.500 16zM17.500 7.500H21"/>'],
 ['<path stroke-width="2.200" stroke-linecap="butt" stroke-linejoin="miter" d="M10 7l5 5-5 5"/>'],
 ['<path class="f" stroke="none" d="M.500.500h10.500v10.500H.500zM13 .500h10.500v10.500H13zM.500 13h10.500v10.500H.500zM13 13h10.500v10.500H13z"/>'],
 [dots],
 ['<path stroke-width="1.700" d="M12 2.500l8 3V12c0 5-3.500 7.500-8 9.500C7.500 19.500 4 17 4 12V5.500z"/><path stroke-width="2.600" d="M8 12l3 3 5.500-5.500"/>','#151515'],
 ['<path stroke-width="1.500" d="M12 1H3.500A2.500 2.500 0 0 0 1 3.500v17A2.500 2.500 0 0 0 3.500 23h17a2.500 2.500 0 0 0 2.500-2.500V12M9 15L23 1M17 1h6v6"/>','#eebcbc'],
 ['<path stroke-width="1.800" d="M18 1.500L6.500 12 18 22.500"/>',PINK],
 ['<rect x="1.500" y="1.500" width="9" height="21" rx="4.500"/><path class="f" d="M1.500 12h9v6a4.500 4.500 0 0 1-9 0z"/><g transform="rotate(50 17 15)"><rect x="12.500" y="6" width="8.500" height="17" rx="4.200"/><path class="f" d="M12.500 13h8.500v-3a4.200 4.200 0 0 0-8.500 0z"/></g>',GREEN],
 ['<path stroke-width="1.700" d="M1.500 22.500l5.500-5.500M7 17l-1-3L15.500 5l4 4-9.500 9zM14 3.500l6.500 6.500M17.500 6.500l3-3M18.500 1.500l4 4"/><path class="f" d="M7 14l5-5 3.500 3.500-5.500 5-3-1z"/>',GREEN],
 ['<path stroke-width="1.700" d="M7.500 1.500h9M8.500 2v17a3.500 3.500 0 0 0 7 0V2"/><path class="f" d="M10.200 10h3.600v9a1.800 1.800 0 0 1-3.600 0z"/>',GREEN],
 ['<path stroke-width="1.700" d="M12 21C6 16 2 12 2 8c0-6 8-7 10-2 2-5 10-4 10 2 0 4-4 8-10 13z"/>',PINK],
 ['<circle cx="14" cy="5" r="3"/><path d="M5 5v8M9 9v8M14 8v12M18 3v8"/>',PINK],
 ['<ellipse cx="12" cy="9" rx="9" ry="6.500" stroke-width="1.700"/>',PINK],
 ['<path class="f" d="M7 2h10v4H7z"/><path stroke-width="1.700" d="M7 6h10v14H7z"/>','#d98a90']
];
document.getElementById('tiles').innerHTML = icons.map(([d, c]) =>
 `<button class="tile" aria-label="Icon"${c ? ` style="color:${c}"` : ''}><svg viewBox="0 0 24 24">${d}</svg></button>`).join('');
</script>
</body>
</html>
